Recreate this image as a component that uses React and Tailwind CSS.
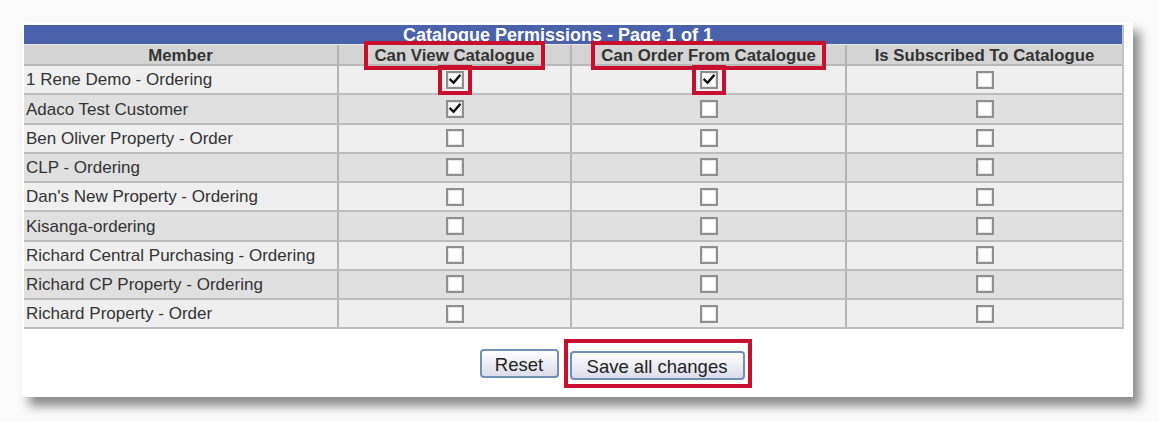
import React from 'react'

const members = [
  { name: '1 Rene Demo - Ordering', view: true, order: true, sub: false },
  { name: 'Adaco Test Customer', view: true, order: false, sub: false },
  { name: 'Ben Oliver Property - Order', view: false, order: false, sub: false },
  { name: 'CLP - Ordering', view: false, order: false, sub: false },
  { name: "Dan's New Property - Ordering", view: false, order: false, sub: false },
  { name: 'Kisanga-ordering', view: false, order: false, sub: false },
  { name: 'Richard Central Purchasing - Ordering', view: false, order: false, sub: false },
  { name: 'Richard CP Property - Ordering', view: false, order: false, sub: false },
  { name: 'Richard Property - Order', view: false, order: false, sub: false },
]

function Box({ checked }) {
  return (
    <span className="inline-flex h-[18px] w-[18px] items-center justify-center border-2 border-[#8f8f8f] bg-white shadow-[inset_0_0_0_1px_#e6e6e6]">
      {checked && (
        <svg width="12" height="11" viewBox="0 0 12 11">
          <path d="M1.5 5.8 L4.6 8.8 L10.6 1.8" fill="none" stroke="#111" strokeWidth="2.5" strokeLinecap="square" />
        </svg>
      )}
    </span>
  )
}

function Highlight({ children, on, wide }) {
  if (!on) return children
  return (
    <span className={`inline-flex ${wide ? 'px-[6px]' : 'px-[4px]'} py-[2px] outline-4 outline-[#c8102e]`}>
      {children}
    </span>
  )
}

export default function App() {
  return (
    <div className="min-h-screen bg-[#fbfbfb] pl-[22px] pt-[22px] font-['Liberation_Sans',Arial,sans-serif]">
      <div className="h-[375px] w-[1111px] bg-white pl-[2px] pt-[3px] shadow-[7px_9px_10px_rgba(0,0,0,0.45)]">
        <div className="w-[1100px] border-r-2 border-[#c4c4c4]">
          <div className="flex h-[19px] items-end justify-center overflow-hidden bg-[#4a62ab] pr-[30px] text-[18px] font-bold leading-[18px] text-white">
            Catalogue Permissions - Page 1 of 1
          </div>
          <div className="grid h-[22px] grid-cols-[315px_233px_275px_275px] border-t border-[#e8e8e8] border-b-2 border-b-[#b9b9b9] bg-[#d4d4d4] text-[16.8px] font-bold leading-[17px] text-[#333]">
            <div className="flex items-center justify-center border-r-2 border-[#b4b4b4]">Member</div>
            <div className="flex items-center justify-center border-r-2 border-[#b4b4b4]">
              <Highlight on wide>Can View Catalogue</Highlight>
            </div>
            <div className="flex items-center justify-center border-r-2 border-[#b4b4b4]">
              <Highlight on wide>Can Order From Catalogue</Highlight>
            </div>
            <div className="flex items-center justify-center">Is Subscribed To Catalogue</div>
          </div>
          {members.map((m, i) => (
            <div
              key={m.name}
              className={`grid h-[29.25px] grid-cols-[315px_233px_275px_275px] border-b-2 border-[#bcbcbc] text-[17px] text-[#333] ${i % 2 === 0 ? 'bg-[#efefef]' : 'bg-[#e0e0e0]'}`}
            >
              <div className="flex items-center border-r-2 border-[#b4b4b4] pl-[2px] pt-[1px]">{m.name}</div>
              <div className="flex items-center justify-center border-r-2 border-[#b4b4b4]">
                <Highlight on={i === 0}>
                  <Box checked={m.view} />
                </Highlight>
              </div>
              <div className="flex items-center justify-center border-r-2 border-[#b4b4b4]">
                <Highlight on={i === 0}>
                  <Box checked={m.order} />
                </Highlight>
              </div>
              <div className="flex items-center justify-center">
                <Box checked={m.sub} />
              </div>
            </div>
          ))}
        </div>
        <div className="flex w-[1100px] justify-center gap-[9px] pl-[79px] pt-[20px]">
          <button className="h-[29px] w-[79px] rounded-[4px] border-2 border-[#7090b8] bg-gradient-to-b from-white to-[#dcdcec] text-[18.5px] text-[#222]">
            Reset
          </button>
          <span className="inline-flex -mt-[6px] h-[41px] items-end pb-[4px] pl-[2px] pr-[3px] outline-4 outline-[#c8102e]">
            <button className="h-[29px] w-[175px] rounded-[4px] border-2 border-[#7090b8] bg-gradient-to-b from-white to-[#dcdcec] text-[18.5px] text-[#222]">
              Save all changes
            </button>
          </span>
        </div>
      </div>
    </div>
  )
}
